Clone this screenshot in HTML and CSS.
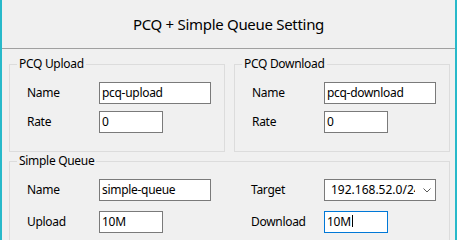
FILE: index.html
```html
<!DOCTYPE html>
<html>
<head>
<meta charset="utf-8">
<link rel="stylesheet" href="styles.css">
</head>
<body>
<div class="window">
  <div class="title">PCQ + Simple Queue Setting</div>
  <div class="content">
    <div class="pcq-row">
      <fieldset class="group">
        <legend>PCQ Upload</legend>
        <div class="form">
          <span class="label">Name</span>
          <div class="field wide">pcq-upload</div>
          <span class="label">Rate</span>
          <div class="field narrow">0</div>
        </div>
      </fieldset>
      <fieldset class="group">
        <legend>PCQ Download</legend>
        <div class="form">
          <span class="label">Name</span>
          <div class="field wide">pcq-download</div>
          <span class="label">Rate</span>
          <div class="field narrow">0</div>
        </div>
      </fieldset>
    </div>
    <fieldset class="group simple">
      <legend>Simple Queue</legend>
      <div class="form form-simple">
        <span class="label">Name</span>
        <div class="field wide">simple-queue</div>
        <span class="label">Target</span>
        <div class="field wide select">
          <span class="select-text">192.168.52.0/24</span>
          <svg class="chevron" width="8" height="5" viewBox="0 0 8 5"><path d="M0.5 0.5 L4 4 L7.5 0.5" fill="none" stroke="#5a5a5a" stroke-width="1"/></svg>
        </div>
        <span class="label">Upload</span>
        <div class="field narrow">10M</div>
        <span class="label">Download</span>
        <div class="field narrow focused">10M<span class="caret"></span></div>
      </div>
    </fieldset>
  </div>
</div>
</body>
</html>
```

FILE: styles.css
```css
* { box-sizing: border-box; }
html, body {
  margin: 0;
  padding: 0;
  background: #f0f0f0;
}
body {
  font-family: "Noto Sans", "Open Sans", sans-serif;
  font-size: 12px;
  letter-spacing: -0.3px;
  color: #000;
}
.window {
  width: 457px;
  height: 240px;
  overflow: hidden;
  background: #f0f0f0;
  border-left: 2px solid #27b9ca;
  border-right: 2px solid #27b9ca;
}
.title {
  height: 49px;
  border-bottom: 1px solid #a0a0a0;
  display: flex;
  align-items: center;
  justify-content: center;
  font-size: 15px;
  letter-spacing: -0.3px;
  padding-bottom: 1px;
}
.content {
  padding: 7px 5px 0 7px;
}
.pcq-row {
  display: flex;
  gap: 9px;
}
.group {
  margin: 0;
  min-width: 0;
  width: 216px;
  border: 1px solid #dcdcdc;
  padding: 10px 0 18px 17px;
}
.group legend {
  padding: 0 2px;
  margin-left: -10px;
  line-height: 16px;
  font-size: 12px;
}
.simple {
  width: 441px;
  margin-top: 1px;
}
.form {
  display: grid;
  grid-template-columns: 72px auto;
  row-gap: 7px;
  align-items: center;
  justify-items: start;
}
.form-simple {
  grid-template-columns: 72px 152px 73px auto;
  row-gap: 10px;
}
.label {
  padding-bottom: 2px;
  white-space: nowrap;
}
.field {
  height: 22px;
  background: #fff;
  border: 1px solid #7a7a7a;
  padding: 0 2px 2px 2px;
  display: flex;
  align-items: center;
  white-space: nowrap;
  overflow: hidden;
}
.wide { width: 112px; }
.narrow { width: 64px; }
.focused { border-color: #0078d7; }
.caret {
  display: inline-block;
  width: 1px;
  height: 12px;
  background: #000;
  margin-left: 1px;
}
.select {
  padding-left: 6px;
}
.select-text {
  display: block;
  width: 84px;
  overflow: hidden;
  white-space: nowrap;
  letter-spacing: 0;
}
.chevron {
  display: block;
  margin-left: 8px;
  margin-top: 2px;
}
```
